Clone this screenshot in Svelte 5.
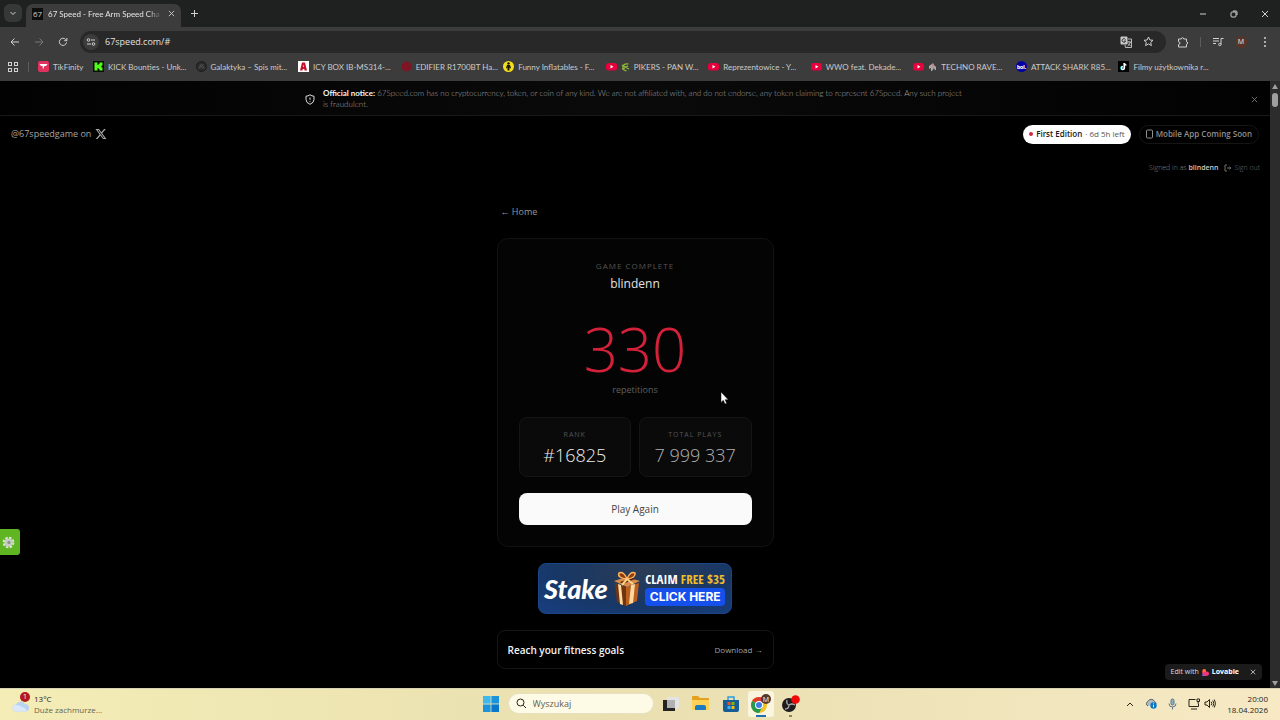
<script lang="ts">
	type Bookmark = { label: string; icon: string; extra?: string };

	const bookmarks: Bookmark[] = [
		{ label: 'KICK Bounties - Unk...', icon: 'kick' },
		{ label: 'Galaktyka – Spis mit...', icon: 'galaxy' },
		{ label: 'ICY BOX IB-MS314-...', icon: 'icy' },
		{ label: 'EDIFIER R1700BT Ha...', icon: 'edifier' },
		{ label: 'Funny Inflatables - F...', icon: 'funny' },
		{ label: 'PIKERS - PAN W...', icon: 'youtube', extra: 'leaf' },
		{ label: 'Reprezentowice - Y...', icon: 'youtube' },
		{ label: 'WWO feat. Dekade...', icon: 'youtube' },
		{ label: 'TECHNO RAVE...', icon: 'youtube', extra: 'horse' },
		{ label: 'ATTACK SHARK R85...', icon: 'bol' },
		{ label: 'Filmy użytkownika r...', icon: 'tiktok' }
	];

	const stats = [
		{ label: 'Rank', value: '#16825', strong: true },
		{ label: 'Total plays', value: '7 999 337', strong: false }
	];

	let address = $state('67speed.com/#');
	let search = $state('');
	let noticeOpen = $state(true);
	let badgeOpen = $state(true);
</script>

{#snippet cross(size: number)}
	<svg width={size} height={size} viewBox="0 0 8 8" class="line"><path d="M1 1l6 6M7 1L1 7" /></svg>
{/snippet}

{#snippet favicon(name: string)}
	<svg class="favicon" width="11" height="11" viewBox="0 0 22 22">
		{#if name === 'tikfinity'}
			<rect width="22" height="22" rx="4" fill="#e0315f" />
			<path d="M3 6h16l-3 4h-3l-3 7-1-7H6z" fill="#fff" />
		{:else if name === 'kick'}
			<rect width="22" height="22" fill="#0a0f08" />
			<path d="M3 3h6v5h2V6h2V3h6v6h-2v4h2v6h-6v-3h-2v-2H9v5H3z" fill="#53fc18" />
		{:else if name === 'galaxy'}
			<circle cx="11" cy="11" r="10" fill="#2b2b2b" stroke="#1d1d1d" stroke-width="2" />
			<path d="M5 15l6-9 6 9M7 8l8 8M15 7l-9 8" fill="none" stroke="#555" stroke-width="1.5" />
		{:else if name === 'icy'}
			<rect width="22" height="22" fill="#fff" />
			<path d="M8 3h6l4 16h-5l-.5-3h-3l-.5 3H4zM10 12h2l-1-5z" fill="#c8102e" fill-rule="evenodd" />
		{:else if name === 'edifier'}
			<circle cx="11" cy="11" r="10" fill="#7d1523" />
		{:else if name === 'funny'}
			<circle cx="11" cy="11" r="11" fill="#f5df1c" />
			<circle cx="11" cy="5" r="2.5" fill="#181700" />
			<path d="M8 8h6l2 6-2 1-1-3v7H9v-7l-1 3-2-1z" fill="#181700" />
		{:else if name === 'youtube'}
			<rect y="4" width="22" height="15" rx="5" fill="#e6003c" />
			<path d="M9 8l6 3.500-6 3.500z" fill="#fff" />
		{:else if name === 'bol'}
			<circle cx="11" cy="11" r="11" fill="#0000a4" />
			<text x="11" y="15" text-anchor="middle" font-size="11" font-weight="800" fill="#fff">bol.</text>
		{:else if name === 'tiktok'}
			<rect width="22" height="22" fill="#000" />
			<path d="M12 4v10a3 3 0 1 1-3-3" fill="none" stroke="#25f4ee" stroke-width="3" />
			<path d="M13 4v10a3 3 0 1 1-3-3M13 4c0 3 2 4 4 4" fill="none" stroke="#fff" stroke-width="2.500" />
		{/if}
	</svg>
{/snippet}

<div class="desktop">
	<div class="tabstrip">
		<button class="tab-search" aria-label="Search tabs">
			<svg width="8" height="8" viewBox="0 0 8 8" class="line"><path d="M1.500 3L4 5.500 6.500 3" /></svg>
		</button>
		<div class="tab">
			<span class="tab-logo">67</span>
			<span class="tab-title">67 Speed - Free Arm Speed Cha</span>
			<button aria-label="Close tab">{@render cross(7)}</button>
		</div>
		<button class="new-tab" aria-label="New tab">
			<svg width="9" height="9" viewBox="0 0 9 9" class="line"><path d="M4.500 1v7M1 4.500h7" /></svg>
		</button>
		<div class="window-controls">
			<button aria-label="Minimise">
				<svg width="8" height="8" viewBox="0 0 8 8" class="line"><path d="M1 4h6" /></svg>
			</button>
			<button aria-label="Restore">
				<svg width="8" height="8" viewBox="0 0 8 8" class="line">
					<rect x="1" y="2" width="5" height="5" rx="1" />
					<path d="M3 1h3q1 0 1 1v3" />
				</svg>
			</button>
			<button aria-label="Close">{@render cross(8)}</button>
		</div>
	</div>

	<div class="toolbar">
		<button aria-label="Back">
			<svg width="10" height="10" viewBox="0 0 10 10" class="line"><path d="M9 5H1M4.500 1.500L1 5l3.500 3.500" /></svg>
		</button>
		<button class="off" aria-label="Forward">
			<svg width="10" height="10" viewBox="0 0 10 10" class="line"><path d="M1 5h8M5.500 1.500L9 5 5.500 8.500" /></svg>
		</button>
		<button aria-label="Reload">
			<svg width="10" height="10" viewBox="0 0 10 10" class="line"><path d="M8.500 5.500A3.600 3.600 0 1 1 7.600 2.400L8.800 3.600M8.900 1v2.700H6.200" /></svg>
		</button>
		<div class="omnibox">
			<button class="site-info" aria-label="Site information">
				<svg width="10" height="10" viewBox="0 0 10 10" class="line">
					<circle cx="2.500" cy="3" r="1.300" /><path d="M5 3h4M1 7h4" /><circle cx="7.500" cy="7" r="1.300" />
				</svg>
			</button>
			<input type="text" aria-label="Address" bind:value={address} />
			<button aria-label="Translate">
				<svg width="12" height="12" viewBox="0 0 12 12">
					<rect x="0.500" y="0.500" width="7" height="8" rx="1" fill="#c9c9c9" />
					<path d="M5.500 3.500A1.800 1.800 0 1 0 5.700 5H4" fill="none" stroke="#333" />
					<path d="M8 3h3.500v8.500H5.500L5 9M7 6h4M9 5v1M10.500 6Q9.500 9 7.500 10M8 7.500l2.500 2.500" fill="none" stroke="#c9c9c9" stroke-width="0.900" />
				</svg>
			</button>
			<button aria-label="Bookmark this page">
				<svg width="11" height="11" viewBox="0 0 11 11" class="line"><path d="M5.500 1l1.400 3 3.100.3-2.300 2.100.7 3.200-2.900-1.700-2.900 1.700.7-3.200L1 4.300 4.100 4z" /></svg>
			</button>
		</div>
		<button class="extensions" aria-label="Extensions">
			<svg width="12" height="12" viewBox="0 0 12 12" class="line"><path d="M1.500 3h2.800a1.200 1.200 0 1 1 2.400 0h2.800v2.800a1.200 1.200 0 1 1 0 2.400V11h-8V8.500a1.400 1.400 0 0 0 0-2.800z" /></svg>
		</button>
		<span class="divider"></span>
		<button class="media" aria-label="Media">
			<svg width="12" height="10" viewBox="0 0 12 10" class="line"><path d="M1 1.500h6M1 4h6M1 6.500h3M9 7.500V1.500h2.500" /><circle cx="7.800" cy="7.500" r="1.200" /></svg>
		</button>
		<button class="avatar" aria-label="Profile">M</button>
		<button class="menu" aria-label="Menu">
			<svg width="4" height="10" viewBox="0 0 4 10" fill="#d0d0d0"><circle cx="2" cy="1" r="1" /><circle cx="2" cy="5" r="1" /><circle cx="2" cy="9" r="1" /></svg>
		</button>
	</div>

	<nav class="bookmarks" aria-label="Bookmarks">
		<button class="apps" aria-label="Apps">
			<svg width="10" height="10" viewBox="0 0 10 10" class="line">
				<rect x="0.500" y="0.500" width="3" height="3" /><rect x="6.500" y="0.500" width="3" height="3" />
				<rect x="0.500" y="6.500" width="3" height="3" /><rect x="6.500" y="6.500" width="3" height="3" />
			</svg>
		</button>
		<span class="divider"></span>
		<a href="#tikfinity" class="bookmark first">{@render favicon('tikfinity')}<span>TikFinity</span></a>
		<div class="bookmark-grid">
			{#each bookmarks as item}
				<a href="#bookmark" class="bookmark">
					{@render favicon(item.icon)}
					{#if item.extra}
						<svg class="emoji" width="9" height="10" viewBox="0 0 9 10">
							{#if item.extra === 'leaf'}
								<path d="M7.500 2Q3 1 2 4.500T5.500 9M1 3l3 2 3-1M4 5l4 2M1 7l3-1" stroke="#93bd3b" stroke-width="1.200" fill="none" />
							{:else}
								<path d="M1 7V4l3-2 1-1 1 2 2 2v3H7L6 6 4 9H3V6z" fill="#aaa" /><path d="M5 2v4" stroke="#d66" stroke-width="0.800" />
							{/if}
						</svg>
					{/if}
					<span>{item.label}</span>
				</a>
			{/each}
		</div>
	</nav>

	<div class="viewport">
		<div class="page">
			{#if noticeOpen}
				<aside class="notice">
					<svg width="10" height="11" viewBox="0 0 10 11" class="line"><path d="M5 .8Q7 2.200 9 2.200v3.300Q9 8.800 5 10.300 1 8.800 1 5.500V2.200q2 0 4-1.400zM5 3.500v2.300M5 7v.8" /></svg>
					<p><strong>Official notice:</strong> 67Speed.com has no cryptocurrency, token, or coin of any kind. We are not affiliated with, and do not endorse, any token claiming to represent 67Speed. Any such project is&nbsp;fraudulent.</p>
					<button class="dismiss" aria-label="Dismiss notice" onclick={() => (noticeOpen = false)}>{@render cross(7)}</button>
				</aside>
			{/if}

			<header>
				<a class="handle" href="#x">
					@67speedgame on
					<svg width="12" height="12" viewBox="0 0 24 24" fill="#aaa"><path d="M18.200 2.200h3.400l-7.300 8.300 8.500 11.300h-6.700l-5.200-6.800-6 6.800H1.500l7.800-8.900L1.100 2.200H8l4.700 6.200zM17 19.800h1.900L7 4.100H5z" /></svg>
				</a>
				<div class="pills">
					<a class="edition" href="#edition"><i></i><strong>First Edition</strong><span>· 6d 5h left</span></a>
					<span class="mobile">
						<svg width="7" height="10" viewBox="0 0 7 10" class="line"><rect x="0.500" y="1" width="6" height="8" rx="1" /></svg>
						Mobile App Coming Soon
					</span>
				</div>
			</header>

			<div class="account">
				<span>Signed in as <strong>blindenn</strong></span>
				<button>
					<svg width="8" height="8" viewBox="0 0 8 8" class="line"><path d="M3 1H1v6h2M3 4h4M5.500 2.500L7 4 5.500 5.500" /></svg>
					Sign out
				</button>
			</div>

			<main>
				<a class="home" href="#home">← Home</a>

				<section class="card">
					<h2>Game complete</h2>
					<p class="player">blindenn</p>
					<p class="score">330</p>
					<p class="unit">repetitions</p>
					<div class="stats">
						{#each stats as stat}
							<div class="stat" class:strong={stat.strong}>
								<span>{stat.label}</span>
								<b>{stat.value}</b>
							</div>
						{/each}
					</div>
					<button class="again">Play Again</button>
				</section>

				<a class="stake" href="#stake">
					<span class="stake-name">Stake</span>
					<svg width="28" height="38" viewBox="0 0 28 38">
						<path d="M2 13l11 4v19L4 32z" fill="#70340f" />
						<path d="M13 17l13-4-2 18-11 5z" fill="#b9601f" />
						<path d="M1 11l12-4 14 4-13 6z" fill="#d88c45" />
						<path d="M5 14l3 1 2 20-3-1zM18 15l4-1-2 19-4 1z" fill="#ffd9a0" />
						<path d="M7 12l12-4 3 1-12 5z" fill="#5c260c" />
						<path d="M14 9Q4 8 6 3q5-2 8 6zM14 9q9-1 8-6-5-2-8 6z" fill="#8f3d10" stroke="#ffb35c" stroke-width="1.500" />
						<path d="M14 9l-5 6M14 9l6 5" stroke="#ffd28b" stroke-width="2" />
					</svg>
					<span class="offer">
						<span class="claim">CLAIM <em>FREE $35</em></span>
						<span class="click">CLICK HERE</span>
					</span>
				</a>

				<a class="fitness" href="#fitness">
					<strong>Reach your fitness goals</strong>
					<span>Download →</span>
				</a>
			</main>

			<button class="side-tab" aria-label="Settings">
				<svg width="13" height="13" viewBox="0 0 14 14">
					<circle cx="7" cy="7" r="5.200" fill="none" stroke="#dfe6d8" stroke-width="2.200" stroke-dasharray="2.600 1.480" />
					<circle cx="7" cy="7" r="4.400" fill="#c9cfc4" />
					<circle cx="7.500" cy="7" r="1.800" fill="#8b9a80" />
				</svg>
			</button>

			{#if badgeOpen}
				<div class="lovable">
					<a href="#lovable">
						Edit with
						<svg width="7" height="7" viewBox="0 0 14 14">
							<path d="M1 3q0-3 3.500-3T8 3v2q6-1 6 4 0 5-6 5H1z" fill="#f0357f" />
							<path d="M1 3q0-3 3.500-3T8 3v2L1 8z" fill="#ff6a2c" />
							<path d="M1 9l5 5H1z" fill="#6a6cff" />
						</svg>
						<strong>Lovable</strong>
					</a>
					<button aria-label="Close badge" onclick={() => (badgeOpen = false)}>{@render cross(6)}</button>
				</div>
			{/if}
		</div>

		<div class="scrollbar" aria-hidden="true">
			<svg width="6" height="5" viewBox="0 0 6 5" fill="#9f9f9f"><path d="M3 0l3 5H0z" /></svg>
			<span class="thumb"></span>
			<svg class="down" width="6" height="5" viewBox="0 0 6 5" fill="#9f9f9f"><path d="M3 5l3-5H0z" /></svg>
		</div>
	</div>

	<footer class="taskbar">
		<button class="weather">
			<span class="cloud">
				<svg width="18" height="12" viewBox="0 0 18 12">
					<path d="M4 11.500a3.500 3.500 0 0 1 0-7A5 5 0 0 1 13 4a3.800 3.800 0 0 1 1 7.500z" fill="#b9d3f3" />
					<path d="M4 11.500a3.500 3.500 0 0 1-1-6.800Q8 5 13 8.500l2 2.700-1 .3z" fill="#dbe8fa" />
				</svg>
				<span class="count">1</span>
			</span>
			<span class="forecast"><b>13°C</b><span>Duże zachmurze...</span></span>
		</button>

		<div class="dock">
			<button aria-label="Start">
				<svg width="16" height="16" viewBox="0 0 16 16">
					<path d="M0 0h7.600v7.600H0z" fill="#3fb8ee" /><path d="M8.400 0H16v7.600H8.400zM0 8.400h7.600V16H0z" fill="#1c94dc" /><path d="M8.400 8.400H16V16H8.400z" fill="#0878cb" />
				</svg>
			</button>
			<label class="search">
				<svg width="11" height="11" viewBox="0 0 11 11" class="line"><circle cx="4.500" cy="4.500" r="3.500" /><path d="M7.200 7.200L10 10" /></svg>
				<input type="text" placeholder="Wyszukaj" aria-label="Wyszukaj" bind:value={search} />
			</label>
			<button class="app" aria-label="Task view">
				<svg width="16" height="16" viewBox="0 0 16 16"><rect x="4" y="1" width="12" height="11" fill="#e3e3e3" /><rect x="0" y="4" width="12" height="11" fill="#242424" /><rect x="4" y="4" width="8" height="8" fill="#b1b1b1" /></svg>
			</button>
			<button class="app" aria-label="Files">
				<svg width="17" height="15" viewBox="0 0 17 15"><path d="M0 1q0-1 1-1h5l2 2h8q1 0 1 1v11H0z" fill="#e4a11f" /><path d="M0 4h17v10H0z" fill="#ffd257" /><path d="M3 14v-3q0-2 2-2h7q2 0 2 2v3z" fill="#1d7bc0" /></svg>
			</button>
			<button class="app" aria-label="Store">
				<svg width="16" height="16" viewBox="0 0 16 16"><path d="M5 4V1h6v3" fill="none" stroke="#2b9ede" stroke-width="1.500" /><path d="M0 4h16v10q0 2-2 2H2q-2 0-2-2z" fill="#175d96" /><path d="M4.500 6h3v3h-3z" fill="#f25022" /><path d="M8.500 6h3v3h-3z" fill="#7fba00" /><path d="M4.500 10h3v3h-3z" fill="#3ab5ef" /><path d="M8.500 10h3v3h-3z" fill="#ffb900" /></svg>
			</button>
			<button class="app current" aria-label="Chrome">
				<svg width="20" height="20" viewBox="0 0 20 20">
					<circle cx="8" cy="11" r="8" fill="#f6c224" />
					<path d="M8 11L1.100 7A8 8 0 0 1 14.900 7z" fill="#df3b30" />
					<path d="M8 11L1.100 7A8 8 0 0 0 8 19l3.500-6z" fill="#27984d" />
					<circle cx="8" cy="11" r="4" fill="#fff" /><circle cx="8" cy="11" r="3" fill="#3b7fe6" />
					<circle cx="15" cy="5" r="5" fill="#51392f" />
					<text x="15" y="8" text-anchor="middle" font-size="7" fill="#fff">M</text>
				</svg>
			</button>
			<button class="app running" aria-label="OBS Studio">
				<svg width="18" height="18" viewBox="0 0 18 18">
					<circle cx="7" cy="10" r="7" fill="#1f1b1f" />
					<path d="M7 10q-3-1-2-5M7 10q3-2 6 0M7 10q0 4-4 4" fill="none" stroke="#aaa" stroke-width="1.300" />
					<circle cx="13.500" cy="4.500" r="4.300" fill="#f00808" />
				</svg>
			</button>
		</div>

		<div class="tray">
			<button aria-label="Show hidden icons"><svg width="8" height="6" viewBox="0 0 8 6" class="line"><path d="M1 5l3-3 3 3" /></svg></button>
			<button aria-label="OneDrive">
				<svg width="12" height="11" viewBox="0 0 12 11"><path d="M3 8a2.400 2.400 0 0 1 0-4.500 3.500 3.500 0 0 1 6.500 0A2.500 2.500 0 0 1 11 6" fill="#b5bcc0" stroke="#57666e" /><circle cx="8.500" cy="7.500" r="3.200" fill="#0879c9" /><path d="M8.500 7v2.300M8.500 5.500v.8" stroke="#fff" /></svg>
			</button>
			<button aria-label="Microphone">
				<svg width="9" height="12" viewBox="0 0 9 12" class="mic"><rect x="3" y="1" width="3" height="6" rx="1.500" fill="#8fb0c4" /><path d="M1 5.500q0 3.500 3.500 3.500T8 5.500M4.500 9v2.500" /></svg>
			</button>
			<span class="system">
				<svg width="12" height="12" viewBox="0 0 12 12" class="line"><path d="M7.500 1.500H1v7h9.500V6M3 11h6M9 1h2.500v2.500H9zM10.200 3.500V6" /></svg>
				<svg width="12" height="11" viewBox="0 0 12 11" class="line"><path d="M1 4h2l2.500-2.500v8L3 7H1zM7.200 3.800q1.200 1.700 0 3.400M8.800 2.500q2 3 0 6M10.300 1.500q2.500 4 0 8" /></svg>
			</span>
			<span class="clock"><span>20:00</span><span>18.04.2026</span></span>
		</div>
	</footer>

	<svg class="cursor" width="9" height="14" viewBox="0 0 9 14"><path d="M1 1v10.500l2.300-2.200L5 13l1.700-.8-1.600-3.500H8.300z" fill="#fff" stroke="#111" stroke-width="0.500" /></svg>
</div>

<style>
	:global(body) {
		background: #000;
	}

	.desktop {
		display: flex;
		flex-direction: column;
		height: 100vh;
		overflow: hidden;
		font-family: 'Open Sans', 'Noto Sans', sans-serif;
		font-size: 8px;
		line-height: 12px;
		color: #d0d0d0;
	}

	button,
	input {
		margin: 0;
		padding: 0;
		border: 0;
		background: none;
		color: inherit;
		font: inherit;
	}

	button {
		display: flex;
		align-items: center;
		justify-content: center;
	}

	a {
		color: inherit;
		text-decoration: none;
	}

	p,
	h2 {
		margin: 0;
		font-weight: 400;
	}

	svg {
		flex: none;
	}

	.line {
		fill: none;
		stroke: currentColor;
	}

	.tabstrip {
		display: flex;
		align-items: flex-end;
		flex: none;
		height: 27px;
		background: #1f2120;
	}

	.tab-search {
		width: 18px;
		height: 18px;
		margin: 0 4px 5px;
		border-radius: 6px;
		background: #363837;
	}

	.tab {
		display: flex;
		align-items: center;
		gap: 5px;
		width: 155px;
		height: 23px;
		padding: 0 6px 4px;
		box-sizing: border-box;
		border-radius: 7px 7px 0 0;
		background: #3c3c3c;
	}

	.tab-logo {
		width: 11px;
		background: #0d0d0d;
		text-align: center;
	}

	.tab-title {
		flex: 1;
		overflow: hidden;
		white-space: nowrap;
		color: #e4e4e4;
		font-family: Lato, sans-serif;
		mask-image: linear-gradient(90deg, #000 88%, transparent);
	}

	.tab > button {
		width: 8px;
	}

	.new-tab {
		height: 27px;
		padding: 0 9px;
	}

	.window-controls {
		display: flex;
		height: 27px;
		margin-left: auto;
	}

	.window-controls button {
		width: 31px;
	}

	.toolbar {
		display: flex;
		align-items: center;
		flex: none;
		height: 29px;
		padding: 0 6px 0 3px;
		background: #3c3c3c;
	}

	.toolbar > button {
		width: 24px;
	}

	.toolbar > .off {
		color: #777;
	}

	.omnibox {
		display: flex;
		align-items: center;
		flex: 1;
		gap: 6px;
		height: 22px;
		margin-left: 5px;
		padding: 0 10px 0 3px;
		border-radius: 11px;
		background: #282828;
	}

	.omnibox input {
		flex: 1;
		min-width: 0;
		font-size: 9px;
		color: #e0e0e0;
	}

	.omnibox > button {
		width: 16px;
		height: 16px;
	}

	.omnibox > .site-info {
		border-radius: 50%;
		background: #3c3c3c;
	}

	.toolbar > .extensions {
		width: 34px;
	}

	.divider {
		width: 1px;
		height: 10px;
		background: #5c5c5c;
	}

	.toolbar > .media {
		width: 34px;
	}

	.toolbar > .avatar {
		width: 12px;
		height: 12px;
		border-radius: 50%;
		background: #5a3526;
		color: #eee;
		font-size: 7px;
	}

	.toolbar > .menu {
		width: 18px;
		margin-left: 9px;
	}

	.bookmarks {
		display: flex;
		align-items: center;
		flex: none;
		height: 25px;
		padding: 0 59px 4px 8px;
		box-sizing: border-box;
		background: #3c3c3c;
		font-family: Lato, sans-serif;
	}

	.bookmarks .divider {
		margin: 0 9px 0 10px;
	}

	.bookmark-grid {
		display: grid;
		grid-template-columns: repeat(11, minmax(0, 1fr));
		flex: 1;
	}

	.bookmark {
		display: flex;
		align-items: center;
		gap: 4px;
		white-space: nowrap;
		color: #cacaca;
	}

	.bookmark.first {
		width: 55px;
	}

	.viewport {
		display: flex;
		flex: 1;
		min-height: 0;
		background: #000;
	}

	.page {
		position: relative;
		flex: 1;
		min-width: 0;
		overflow: hidden;
	}

	.notice {
		display: flex;
		align-items: center;
		gap: 8px;
		padding: 7px 12px 5px 305px;
		border-bottom: 1px solid #191919;
		background: linear-gradient(90deg, #020202, #0a0a0a 50%, #020202);
		color: #a0a0a0;
		font-family: Lato, sans-serif;
		line-height: 11px;
	}

	.notice > svg {
		color: #ddd;
	}

	.notice p {
		max-width: 660px;
		font-weight: 300;
	}

	.notice strong {
		color: #f3f3f3;
		font-weight: 700;
	}

	.dismiss {
		margin-left: auto;
		color: #777;
	}

	header {
		display: flex;
		align-items: center;
		justify-content: space-between;
		height: 36px;
		padding: 0 11px;
	}

	.handle,
	.pills,
	.edition,
	.mobile {
		display: flex;
		align-items: center;
	}

	.handle {
		gap: 4px;
		color: #a5a5a5;
		font-size: 9px;
		font-weight: 500;
	}

	.pills {
		gap: 8px;
	}

	.edition,
	.mobile {
		height: 19px;
		padding: 0 6px;
		border-radius: 10px;
		box-sizing: border-box;
	}

	.edition {
		gap: 3px;
		background: #fff;
		color: #555;
	}

	.edition i {
		width: 4px;
		height: 4px;
		border-radius: 50%;
		background: #d52546;
	}

	.edition strong {
		color: #151515;
		font-weight: 600;
	}

	.mobile {
		gap: 3px;
		border: 1px solid #151515;
		color: #919191;
		font-weight: 600;
	}

	.account {
		display: flex;
		align-items: center;
		justify-content: flex-end;
		gap: 6px;
		height: 32px;
		padding: 0 10px;
		color: #808080;
		font-size: 7px;
		font-weight: 300;
	}

	.account strong {
		color: #c9c9c9;
		font-weight: 600;
	}

	.account button {
		gap: 2px;
		color: #707070;
	}

	main {
		display: flex;
		flex-direction: column;
		width: 277px;
		margin: 0 auto;
		padding-top: 21px;
	}

	.home {
		align-self: flex-start;
		margin: 0 0 19px 4px;
		color: #969696;
		font-size: 9px;
		line-height: 14px;
	}

	.card {
		display: flex;
		flex-direction: column;
		padding: 21px;
		border: 1px solid #121212;
		border-radius: 11px;
		background: #040404;
		text-align: center;
	}

	h2 {
		color: #555;
		font-size: 8px;
		letter-spacing: 1px;
		text-transform: uppercase;
	}

	.player {
		margin-top: 2px;
		color: #e2e2e2;
		font-size: 12px;
		line-height: 20px;
	}

	.score {
		margin-top: 23px;
		color: #d32139;
		font-size: 60px;
		font-weight: 300;
		line-height: 64px;
	}

	.unit {
		margin: 2px 0 20px;
		color: #606060;
		font-size: 9px;
		line-height: 14px;
	}

	.stats {
		display: grid;
		grid-template-columns: 1fr 1fr;
		gap: 8px;
	}

	.stat {
		display: flex;
		flex-direction: column;
		padding: 11px 0 7px;
		border: 1px solid #151515;
		border-radius: 8px;
		background: #0a0a0a;
	}

	.stat span {
		color: #555;
		font-size: 7px;
		letter-spacing: 1px;
		text-transform: uppercase;
	}

	.stat b {
		color: #b0b0b0;
		font-size: 18px;
		font-weight: 300;
		line-height: 28px;
	}

	.stat.strong b {
		color: #eee;
	}

	.again {
		height: 32px;
		margin-top: 16px;
		border-radius: 8px;
		background: #fafafa;
		color: #444;
		font-size: 10px;
	}

	.stake {
		display: flex;
		align-items: center;
		align-self: center;
		gap: 4px;
		width: 194px;
		height: 51px;
		margin: 16px 0;
		padding: 0 6px 0 5px;
		box-sizing: border-box;
		border: 1px solid #1c4585;
		border-radius: 8px;
		background: radial-gradient(ellipse at 55% 10%, #2b3c55, #173766 60%, #183f82);
		color: #fff;
	}

	.stake-name {
		flex: 1;
		font-family: Lato, sans-serif;
		font-size: 27px;
		font-style: italic;
		font-weight: 900;
		line-height: 32px;
	}

	.offer {
		display: flex;
		flex-direction: column;
		gap: 1px;
		text-align: center;
		white-space: nowrap;
	}

	.claim {
		font-family: 'Open Sans Condensed', 'Liberation Sans Narrow', 'Roboto Condensed', sans-serif;
		font-size: 13px;
		font-weight: 700;
		line-height: 16px;
	}

	.claim em {
		color: #efbd2b;
		font-style: normal;
	}

	.click {
		padding: 0 4px;
		border-radius: 4px;
		background: #1650ec;
		font-family: Inter, sans-serif;
		font-size: 12px;
		font-weight: 700;
		line-height: 18px;
	}

	.fitness {
		display: flex;
		align-items: center;
		justify-content: space-between;
		height: 37px;
		padding: 0 10px;
		border: 1px solid #151515;
		border-radius: 8px;
		color: #a0a0a0;
	}

	.fitness strong {
		color: #f2f2f2;
		font-size: 10px;
		font-weight: 600;
	}

	.fitness span {
		font-weight: 500;
	}

	.side-tab {
		position: absolute;
		bottom: 133px;
		left: 0;
		width: 20px;
		height: 26px;
		padding-right: 3px;
		border-radius: 0 3px 3px 0;
		background: #5fb522;
	}

	.lovable {
		position: absolute;
		right: 8px;
		bottom: 8px;
		display: flex;
		align-items: center;
		gap: 11px;
		height: 16px;
		padding: 0 6px;
		border-radius: 4px;
		background: #1b1b1b;
		color: #ddd;
		font-size: 7px;
	}

	.lovable a {
		display: flex;
		align-items: center;
		gap: 3px;
	}

	.lovable strong {
		color: #fff;
	}

	.scrollbar {
		display: flex;
		flex-direction: column;
		align-items: center;
		flex: none;
		gap: 4px;
		width: 10px;
		padding: 3px 0 2px;
		background: #2c2c2c;
	}

	.thumb {
		width: 6px;
		height: 14px;
		border-radius: 3px;
		background: #9f9f9f;
	}

	.down {
		margin-top: auto;
	}

	.taskbar {
		display: grid;
		grid-template-columns: 1fr auto 1fr;
		align-items: center;
		flex: none;
		height: 29px;
		padding: 0 0 2px 6px;
		border-top: 1px solid #d8d3b4;
		background: linear-gradient(90deg, #f4edb6, #e9dfb0 48%, #f6e9c4);
		color: #27251c;
	}

	.weather {
		justify-self: start;
		gap: 4px;
		padding-left: 6px;
		text-align: left;
	}

	.cloud {
		position: relative;
		padding-top: 4px;
		line-height: 0;
	}

	.count {
		position: absolute;
		top: -4px;
		right: 0;
		width: 10px;
		border-radius: 50%;
		background: #b3191d;
		color: #fff;
		font-size: 7px;
		line-height: 10px;
		text-align: center;
	}

	.forecast {
		display: flex;
		flex-direction: column;
		line-height: 11px;
	}

	.forecast b {
		font-weight: 500;
	}

	.forecast span {
		color: #69644d;
	}

	.dock {
		display: flex;
		align-items: center;
		gap: 4px;
	}

	.search {
		display: flex;
		align-items: center;
		gap: 6px;
		width: 146px;
		height: 21px;
		margin-left: 5px;
		padding: 0 7px;
		box-sizing: border-box;
		border: 1px solid #e6e0c0;
		border-radius: 11px;
		background: #fdfae6;
	}

	.search input {
		flex: 1;
		min-width: 0;
		font-size: 9px;
	}

	.search input::placeholder {
		color: #66614d;
		opacity: 1;
	}

	.app {
		width: 26px;
		height: 26px;
		border-radius: 3px;
	}

	.app.current {
		background: linear-gradient(#1c70b4, #1c70b4) center bottom / 10px 2px no-repeat #faf5de;
	}

	.app.running {
		background: linear-gradient(#8c8468, #8c8468) center bottom / 3px 2px no-repeat;
	}

	.tray {
		display: flex;
		align-items: center;
		justify-self: end;
		gap: 11px;
		padding-right: 12px;
	}

	.mic {
		fill: none;
		stroke: #5d7688;
	}

	.system {
		display: flex;
		gap: 4px;
	}

	.clock {
		display: flex;
		flex-direction: column;
		line-height: 11px;
		text-align: right;
	}

	.cursor {
		position: fixed;
		top: 391px;
		left: 720px;
		pointer-events: none;
	}
</style>
